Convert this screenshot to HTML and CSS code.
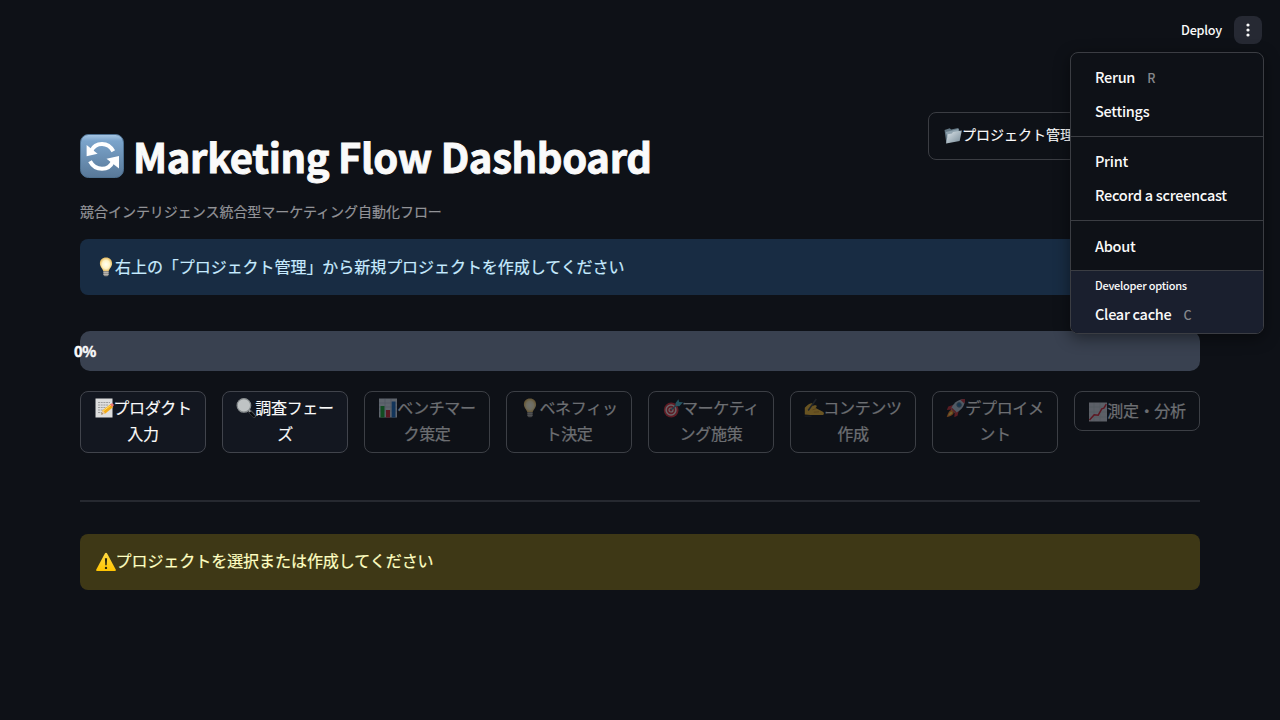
FILE: index.html
```
<!DOCTYPE html>
<html lang="ja">
<head>
<meta charset="utf-8">
<title>Marketing Flow Dashboard</title>
<link rel="stylesheet" href="styles.css">
</head>
<body>
<svg class="defs" aria-hidden="true">
  <defs>
    <linearGradient id="g-blue" x1="0" y1="0" x2="0" y2="1"><stop offset="0" stop-color="#a9c9e6"/><stop offset=".15" stop-color="#7ba4cb"/><stop offset="1" stop-color="#587898"/></linearGradient>
    <linearGradient id="g-folder" x1="0" y1="0" x2="1" y2="1"><stop offset="0" stop-color="#e0e8ed"/><stop offset="1" stop-color="#748895"/></linearGradient>
    <linearGradient id="g-warn" x1="0" y1="0" x2="0" y2="1"><stop offset="0" stop-color="#ffda45"/><stop offset="1" stop-color="#ffc400"/></linearGradient>
    <radialGradient id="g-bulb"><stop offset="0" stop-color="#fffef2"/><stop offset=".6" stop-color="#fff3c5"/><stop offset="1" stop-color="#e8bd62"/></radialGradient>
    <symbol id="bulb" viewBox="0 0 20 20"><path d="M10 .6c-3.8 0-6.1 2.6-6.1 5.9 0 3.5 2.9 5.2 3.4 7.8h5.4c.5-2.6 3.4-4.3 3.4-7.8 0-3.3-2.3-5.9-6.1-5.9z" fill="url(#g-bulb)"/><path d="M7.4 14h5.2v4.1l-1.2 1.2H8.6l-1.2-1.2z" fill="#8d8b86"/><path d="M7.4 15.6h5.2M7.4 17.4h5.2" stroke="#d0cdc5" stroke-width=".7"/></symbol>
    <symbol id="folder" viewBox="0 0 20 20"><path d="M.6 3.200 6.400 1.500l1.500 1.400 7.900-1.700 1.200 2v10L2.600 18z" fill="#637784"/><path d="m2 5.500 14-3.200v5L4 11z" fill="#8fa2ae"/><path d="m4.200 8 4.600-.9 1.200-1.500 9.800-1.600-2.400 11.500L2.400 18.400z" fill="url(#g-folder)"/></symbol>
    <symbol id="memo" viewBox="0 0 20 20"><path d="M1.500 .5h17v19h-17z" fill="#dedede"/><path d="M4 4.500h12M4 7h10M4 9.500h8M4 12h6M4 14.500h4" stroke="#969696" stroke-width=".9" stroke-dasharray="2 .7"/><path d="m7.400 16.400 1.300-4.200 8-6.200 2.600 3-8 6.500z" fill="#f4ab16"/><path d="m9.100 13.100 8-6.100" stroke="#ffe166" stroke-width="1"/><path d="m16 6.500 1.500-1.100c1.200-.5 2.800 1.300 2 2.400l-1.300 1.100z" fill="#ed7776"/><path d="m7.400 16.400 1.300-4.200 2.600 3.300z" fill="#e9c99f"/><path d="m7.400 16.400.5-1.500 1 1.100z" fill="#333"/></symbol>
    <symbol id="search" viewBox="0 0 20 20"><path d="m13.200 12.800 5 5.200" stroke="#4a4f53" stroke-width="3.600" stroke-linecap="round"/><path d="m13.400 13.500 4.500 4.700" stroke="#08090b" stroke-width="2.200" stroke-linecap="round"/><path d="m12 11.400 2.400 2.400" stroke="#a0a5a8" stroke-width="1.800"/><circle cx="7.900" cy="7.400" r="6.800" fill="#bfc3c4" stroke="#868b8d" stroke-width="1.200"/></symbol>
    <symbol id="bars" viewBox="0 0 20 20"><path d="M1 .5h18v19H1z" fill="#d8e2ee"/><path d="M1 5h18M1 9h18M1 13h18M7 1v18M13 1v18" stroke="#a9b8ca" stroke-width=".6"/><path d="M2.500 8h4v11.500h-4z" fill="#16a632"/><path d="M8 12h4v7.500H8z" fill="#cf2637"/><path d="M13.700 3.500h3.800v16h-3.800z" fill="#1769c0"/></symbol>
    <symbol id="target" viewBox="0 0 20 20"><circle cx="8.200" cy="12" r="7.400" fill="#d82c38"/><circle cx="8" cy="12" r="4.900" fill="none" stroke="#eee2e1" stroke-width="1.500"/><circle cx="8" cy="12" r="2" fill="none" stroke="#eee2e1" stroke-width="1.200"/><path d="m8 12 8-7" stroke="#377f94" stroke-width="1.300"/><path d="m12.400 5.200 3-4 .8 2.700 3.800.4-3.600 3.900-3.700-.2z" fill="#4ab8d0"/></symbol>
    <symbol id="writing" viewBox="0 0 20 20"><path d="M.8 16.500V9.800c1.800-2.300 4.500-4.200 6.500-4.600 1.500-.2 2 .9 1.200 2l-.7 1.100 2.600-1c1.700-.6 2.900.5 2 1.600l-.8 1 7.300 3.800c1.400.8 1.300 2.800 0 3.300H6.500z" fill="#f2b934"/><path d="m8.500 11.800 3.800-1.200m-2.600 3.600 5.400-.4" stroke="#b87a1c" stroke-width=".7"/><path d="M4.200 12.500 12.300 1" stroke="#3a4146" stroke-width="1.500"/><path d="M.5 18.200h7" stroke="#39404a" stroke-width=".8"/></symbol>
    <symbol id="rocket" viewBox="0 0 20 20"><path d="m7 7-4.700 1.600L.8 12l5-.4M12.700 13l-1.200 4.800-3.200 1.400.4-5" fill="#c92e35"/><path d="M5 11.300C6.300 6.300 11.600.8 19 1c.3 7.200-5 12.600-10 14z" fill="#b4c7d8"/><path d="M14.300 1.700C16 1 17.500.9 19 1c.1 1.600 0 3-.7 4.600z" fill="#c9323d"/><circle cx="13.100" cy="6.900" r="2.300" fill="#266ca1" stroke="#60788a"/><path d="M6 12C3.600 11.900 2.300 14.400.7 19c4.700-1 7.200-2.600 7-5.100z" fill="#f58122"/><path d="M5.200 13.700c-1 .3-2 1.500-3 4 2.600-.9 3.900-1.900 4.200-3z" fill="#ffe054"/><path d="m5.500 10.200 4.700 4.700" stroke="#c33b3d" stroke-width="1.500"/></symbol>
    <symbol id="trend" viewBox="0 0 20 20"><path d="M1 .5h18v19H1z" fill="#d0d5de"/><path d="M1 5h18M1 10h18M1 15h18M6 1v18M12 1v18" stroke="#b3bac6" stroke-width=".5"/><path d="m1.500 18 4.700-5.300 4 .5 3.600-6.400 2.100-.6 2.400-4.100" fill="none" stroke="#d32034" stroke-width="1.500"/></symbol>
    <symbol id="warn" viewBox="0 0 20 20"><path d="M9 1.300c.5-.8 1.500-.8 2 0l8.700 16.100c.4.8 0 1.700-1 1.700H1.300c-1 0-1.400-.9-1-1.700z" fill="url(#g-warn)"/><path d="M8.900 6.300h2.200l-.4 7H9.300z" fill="#29260f"/><circle cx="10" cy="15.900" r="1.200" fill="#29260f"/></symbol>
  </defs>
</svg>

<header class="toolbar">
  <span class="deploy">Deploy</span>
  <button class="kebab" aria-label="Menu"><svg viewBox="0 0 28 28"><g fill="#fafafa"><circle cx="14" cy="9" r="1.600"/><circle cx="14" cy="14" r="1.600"/><circle cx="14" cy="19" r="1.600"/></g></svg></button>
  <nav class="menu">
    <div class="menu-group"><div class="item">Rerun<kbd>R</kbd></div><div class="item">Settings</div></div>
    <div class="menu-group"><div class="item">Print</div><div class="item">Record a screencast</div></div>
    <div class="menu-group last"><div class="item">About</div></div>
    <div class="dev"><div class="dev-title">Developer options</div><div class="dev-item">Clear cache<kbd>C</kbd></div></div>
  </nav>
</header>

<main class="page">
  <section class="hero">
    <div class="heading">
      <h1><svg viewBox="0 0 44 44"><rect x=".5" y=".5" width="43" height="43" rx="8" fill="url(#g-blue)" stroke="#4d7090"/><path d="M11.200 16.800C13.500 12 17.300 10 22 10c5 0 8.700 2.500 11.300 7.300" fill="none" stroke="#fff" stroke-width="4"/><path d="M6.600 11v11.300l11-2.500z" fill="#fff"/><path d="M33 27.200C31 32 27 34.800 22 34.800c-5.300 0-9.400-2.600-12-7.500" fill="none" stroke="#fff" stroke-width="4"/><path d="M39 22v12.500l-12.500-9.700z" fill="#fff"/></svg><span>Marketing Flow Dashboard</span></h1>
      <p class="caption">競合インテリジェンス統合型マーケティング自動化フロー</p>
    </div>
    <button class="project"><svg class="emoji"><use href="#folder"/></svg><span>プロジェクト管理</span></button>
  </section>
  <div class="alert info"><svg class="emoji"><use href="#bulb"/></svg><span>右上の「プロジェクト管理」から新規プロジェクトを作成してください</span></div>
  <div class="progress"><span>0%</span></div>
  <section class="steps">
    <button class="step"><svg class="emoji"><use href="#memo"/></svg>プロダクト<br>入力</button>
    <button class="step"><svg class="emoji"><use href="#search"/></svg>調査フェー<br>ズ</button>
    <button class="step off"><svg class="emoji"><use href="#bars"/></svg>ベンチマー<br>ク策定</button>
    <button class="step off"><svg class="emoji"><use href="#bulb"/></svg>ベネフィッ<br>ト決定</button>
    <button class="step off"><svg class="emoji"><use href="#target"/></svg>マーケティ<br>ング施策</button>
    <button class="step off"><svg class="emoji"><use href="#writing"/></svg>コンテンツ<br>作成</button>
    <button class="step off"><svg class="emoji"><use href="#rocket"/></svg>デプロイメ<br>ント</button>
    <button class="step off single"><svg class="emoji"><use href="#trend"/></svg>測定・分析</button>
  </section>
  <hr>
  <div class="alert warning"><svg class="emoji"><use href="#warn"/></svg><span>プロジェクトを選択または作成してください</span></div>
</main>
</body>
</html>
```
FILE: styles.css
```
* { box-sizing: border-box; }
body {
  margin: 0;
  height: 720px;
  overflow: hidden;
  background: #0e1117;
  color: #fafafa;
  font: 400 16px/26px "Noto Sans CJK JP", "Noto Sans", sans-serif;
  font-kerning: normal;
}
button { font: inherit; color: inherit; margin: 0; }
.defs { position: absolute; width: 0; height: 0; }
.emoji { width: 20px; height: 20px; flex: none; }

.toolbar {
  position: relative;
  z-index: 2;
  height: 60px;
  padding: 0 18px;
  display: flex;
  align-items: center;
  justify-content: flex-end;
  gap: 12px;
}
.deploy { font-size: 12.7px; font-weight: 500; letter-spacing: -.25px; }
.kebab {
  width: 28px;
  height: 28px;
  padding: 0;
  border: 0;
  border-radius: 8px;
  background: #262933;
}
.kebab svg { display: block; }
.menu {
  position: absolute;
  top: 52px;
  right: 16px;
  width: 194px;
  height: 282px;
  overflow: hidden;
  border: 1px solid #3b3d43;
  border-radius: 8px;
  background: #0e1117;
  box-shadow: 0 4px 16px rgba(0, 0, 0, .45);
  font-size: 14.5px;
  font-weight: 500;
  letter-spacing: -.28px;
}
.menu-group { padding: 7px 24px 8px; border-bottom: 1px solid #3b3d43; }
.menu-group.last { padding: 8px 24px; }
.item { height: 34px; line-height: 34px; }
kbd { margin-left: 12px; font: 500 12.5px "Noto Sans CJK JP", sans-serif; color: #85878c; }
.dev { height: 64px; background: #1a1f2e; padding: 4px 24px; }
.menu-group.last { padding-bottom: 7px; }
.dev-title { font-size: 11px; line-height: 20px; letter-spacing: -.25px; }
.dev-item { line-height: 38px; }

.page { padding: 52px 80px 0; }
.hero { display: flex; justify-content: space-between; height: 127px; }
.heading { padding-top: 19px; }
h1 {
  margin: 0;
  height: 54px;
  display: flex;
  align-items: center;
  gap: 9px;
  font-size: 40px;
  font-weight: 700;
  line-height: 54px;
  white-space: nowrap;
  letter-spacing: -.35px;
}
h1 svg { width: 44px; height: 44px; margin-top: -4px; }
h1 span { margin-top: -5px; -webkit-text-stroke: .9px #fafafa; }
.caption { margin: 16px 0 0; font-size: 14px; line-height: 21px; color: #929397; letter-spacing: -.03px; -webkit-text-stroke: .2px; }
.project {
  width: 272px;
  height: 48px;
  padding: 0 15px;
  display: flex;
  align-items: center;
  border: 1px solid #3b3d43;
  border-radius: 8px;
  background: #0e1117;
  font-size: 14px;
  -webkit-text-stroke: .15px;
}
.project .emoji { width: 18px; height: 18px; }
.project span { margin-top: -4px; }
.alert {
  height: 56px;
  padding: 0 16px;
  display: flex;
  align-items: center;
  border-radius: 8px;
}
.info { background: #182c43; color: #c7ebff; }
.warning { background: #3e3816; color: #ffffc2; }
.alert span { margin: -3px 0 0 -1px; letter-spacing: -.05px; -webkit-text-stroke: .2px; }
.warning span { margin-left: -.5px; }
.progress {
  height: 40px;
  margin-top: 36px;
  border-radius: 10px;
  background: #394150;
  display: flex;
  align-items: center;
  font-size: 14.6px;
  font-weight: 700;
}
.progress span { margin-left: -6px; letter-spacing: -.3px; -webkit-text-stroke: .5px; }
.steps {
  margin-top: 20px;
  display: grid;
  grid-template-columns: repeat(8, 126px);
  gap: 16px;
  align-items: start;
}
.step {
  height: 61.5px;
  padding: 0 0 4px;
  border: 1px solid #41444c;
  border-radius: 8px;
  background: #131720;
  white-space: nowrap;
  line-height: 26px;
  letter-spacing: -.3px;
  -webkit-text-stroke: .15px;
}
.step .emoji { vertical-align: -4.5px; margin-right: -1px; }
.off { opacity: .4; border-color: #82848b; background: transparent; }
.single { height: 40px; padding-bottom: 2px; }
hr { height: 2px; margin: 47.5px 0 31.5px; border: 0; background: #262930; }
```
